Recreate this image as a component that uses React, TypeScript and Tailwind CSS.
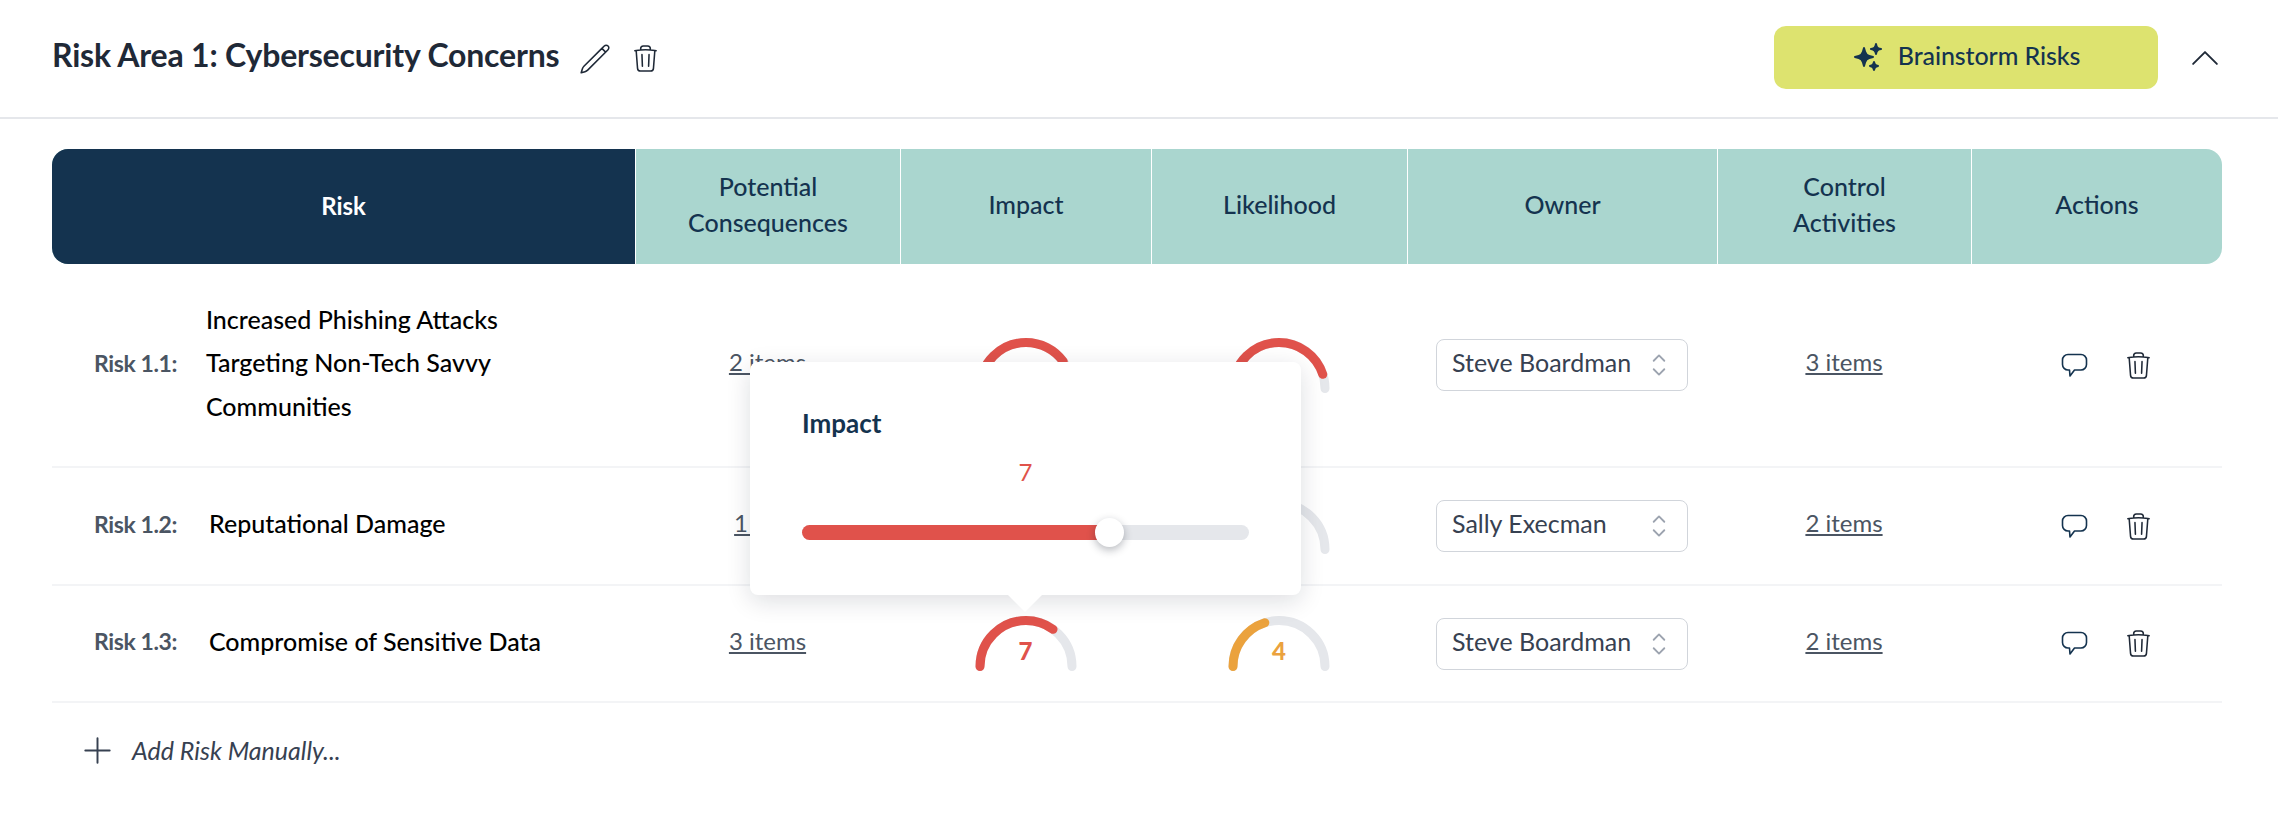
import { HiOutlinePencil, HiOutlineTrash, HiOutlineChevronUp, HiOutlineChevronUpDown, HiOutlinePlus, HiSparkles } from 'react-icons/hi2'

const risks = [
  { id: '1.1', name: 'Increased Phishing Attacks Targeting Non-Tech Savvy Communities', consequences: '2 items', impact: 8, likelihood: 9, owner: 'Steve Boardman', controls: '3 items', rowClass: 'h-[204px]', nameClass: '' },
  { id: '1.2', name: 'Reputational Damage', consequences: '1 item', impact: 5, likelihood: 3, owner: 'Sally Execman', controls: '2 items', rowClass: 'h-[118px]', nameClass: 'ml-[3px]' },
  { id: '1.3', name: 'Compromise of Sensitive Data', consequences: '3 items', impact: 7, likelihood: 4, owner: 'Steve Boardman', controls: '2 items', rowClass: 'h-[117px]', nameClass: 'ml-[3px]' },
]

const columns = 'grid grid-cols-[583px_265px_251px_256px_310px_254px_251px]'

function Gauge({ value }: { value: number }) {
  const high = value >= 6
  return (
    <div className="relative h-[55px] w-[110px]">
      <svg width="110" height="55" viewBox="0 0 110 55" fill="none">
        <path d="M9 50.5A46 46 0 0 1 101 50.5" stroke="#E5E7EB" strokeWidth="9" strokeLinecap="round" />
        <path
          d="M9 50.5A46 46 0 0 1 101 50.5"
          stroke={high ? '#E0524B' : '#EBA23D'}
          strokeWidth="9"
          strokeLinecap="round"
          pathLength={100}
          strokeDasharray={`${value * 10} 200`}
        />
      </svg>
      <span className={`absolute inset-x-0 top-[20px] text-center text-[24px] leading-[30px] font-black ${high ? 'text-[#E0524B]' : 'text-[#EBA23D]'}`}>
        {value}
      </span>
    </div>
  )
}

function Items({ label }: { label: string }) {
  return <span className="-translate-y-[3px] text-[24px] leading-[30px] text-[#4B5563] underline decoration-2 underline-offset-2">{label}</span>
}

function CommentIcon() {
  return (
    <svg width="27" height="25" viewBox="0 0 27 25" fill="none" stroke="#14334F" strokeWidth="1.6" strokeLinejoin="round">
      <path d="M7 1.5h13a5.5 5.5 0 0 1 5.5 5.500v4.500a5.500 5.500 0 0 1-5.500 5.500h-6.500l-4.500 6-.5-6H7a5.500 5.500 0 0 1-5.500-5.500V7A5.500 5.500 0 0 1 7 1.500z" />
    </svg>
  )
}

export default function App() {
  return (
    <div className="relative h-[822px] w-[2278px] bg-white font-[Lato,sans-serif] text-[#1F2937]">
      <header className="flex h-[119px] items-center justify-between border-b-2 border-[#E5E7EB] pr-[54px] pl-[52px]">
        <div className="flex items-center">
          <h1 className="mb-[7px] text-[32px] font-bold tracking-[-0.2px]">Risk Area 1: Cybersecurity Concerns</h1>
          <HiOutlinePencil className="ml-[19px] size-[34px]" strokeWidth={1.1} />
          <HiOutlineTrash className="ml-[18px] size-[31px]" strokeWidth={1.2} />
        </div>
        <div className="mb-[2px] flex items-center">
          <button className="flex h-[63px] w-[384px] items-center justify-center gap-[14px] rounded-xl bg-[#DDE36F] text-[25px] font-medium text-[#14334F]">
            <HiSparkles className="mb-[2px] size-[32px]" />
            <span className="mb-[4px] tracking-[-0.1px]">Brainstorm Risks</span>
          </button>
          <HiOutlineChevronUp className="ml-[28px] size-[38px]" strokeWidth={1.2} />
        </div>
      </header>

      <div className="pt-[30px] pr-[56px] pl-[52px]">
        <div className={`${columns} h-[115px] overflow-hidden rounded-2xl bg-[#AAD6CF] text-center text-[25px] leading-[36px] font-medium text-[#14334F]`}>
          <div className="flex items-center justify-center bg-[#14334F] pb-[2px] text-[24px] font-bold text-white">Risk</div>
          <div className="flex items-center justify-center border-l border-white pb-[5px]">Potential<br />Consequences</div>
          <div className="flex items-center justify-center border-l border-white pb-[5px]">Impact</div>
          <div className="flex items-center justify-center border-l border-white pb-[5px]">Likelihood</div>
          <div className="flex items-center justify-center border-l border-white pb-[5px]">Owner</div>
          <div className="flex items-center justify-center border-l border-white pb-[5px]">Control<br />Activities</div>
          <div className="flex items-center justify-center border-l border-white pb-[5px]">Actions</div>
        </div>

        {risks.map((risk) => (
          <div key={risk.id} className={`${columns} ${risk.rowClass} items-center border-b-2 border-[#F3F4F6]`}>
            <div className="flex items-center gap-[29px] pb-[4px] pl-[42px]">
              <span className="shrink-0 text-[23px] font-bold tracking-[-0.4px] text-[#4B5563]">Risk {risk.id}:</span>
              <span className={`${risk.nameClass} max-w-[340px] text-[25px] leading-[43.5px] font-medium text-black`}>{risk.name}</span>
            </div>
            <div className="flex justify-center"><Items label={risk.consequences} /></div>
            <div className="flex justify-center"><Gauge value={risk.impact} /></div>
            <div className="flex justify-center"><Gauge value={risk.likelihood} /></div>
            <div className="flex justify-center">
              <div className="flex h-[52px] w-[252px] items-center justify-between rounded-lg border-[1.5px] border-[#D1D5DB] pr-[11px] pl-[15px] text-[25px] text-[#374151]">
                <span className="-translate-y-[2px]">{risk.owner}</span>
                <HiOutlineChevronUpDown className="size-[34px] text-[#9CA3AF]" strokeWidth={1.3} />
              </div>
            </div>
            <div className="flex justify-center"><Items label={risk.controls} /></div>
            <div className="flex items-center justify-center gap-[35px] pl-[22px]">
              <CommentIcon />
              <HiOutlineTrash className="size-[31px]" strokeWidth={1.2} />
            </div>
          </div>
        ))}

        <div className="flex items-center gap-[15px] pt-[28px] pl-[26px] text-[25px] text-[#374151] italic">
          <HiOutlinePlus className="size-[39px]" strokeWidth={1.2} />
          <span>Add Risk Manually...</span>
        </div>
      </div>

      {/* Impact popover */}
      <div className="absolute top-[362px] left-[750px] h-[233px] w-[551px] rounded-lg bg-white px-[52px] shadow-[0_6px_24px_rgba(17,24,39,0.14)]">
        <div className="absolute -bottom-[12px] left-[263px] size-[24px] rotate-45 bg-white" />
        <div className="relative pt-[46px] text-[26px] leading-[30px] font-bold text-[#14334F]">Impact</div>
        <div className="relative mt-[19px] text-center text-[24px] leading-[30px] text-[#E0524B]">7</div>
        <div className="relative mt-[38px] h-[15px] w-[447px] rounded-full bg-[#E5E7EB]">
          <div className="h-full w-[307px] rounded-full bg-[#E0524B]" />
          <div className="absolute top-[-7px] left-[293px] size-[29px] rounded-full bg-white shadow-[0_3px_8px_rgba(17,24,39,0.3)]" />
        </div>
      </div>
    </div>
  )
}
